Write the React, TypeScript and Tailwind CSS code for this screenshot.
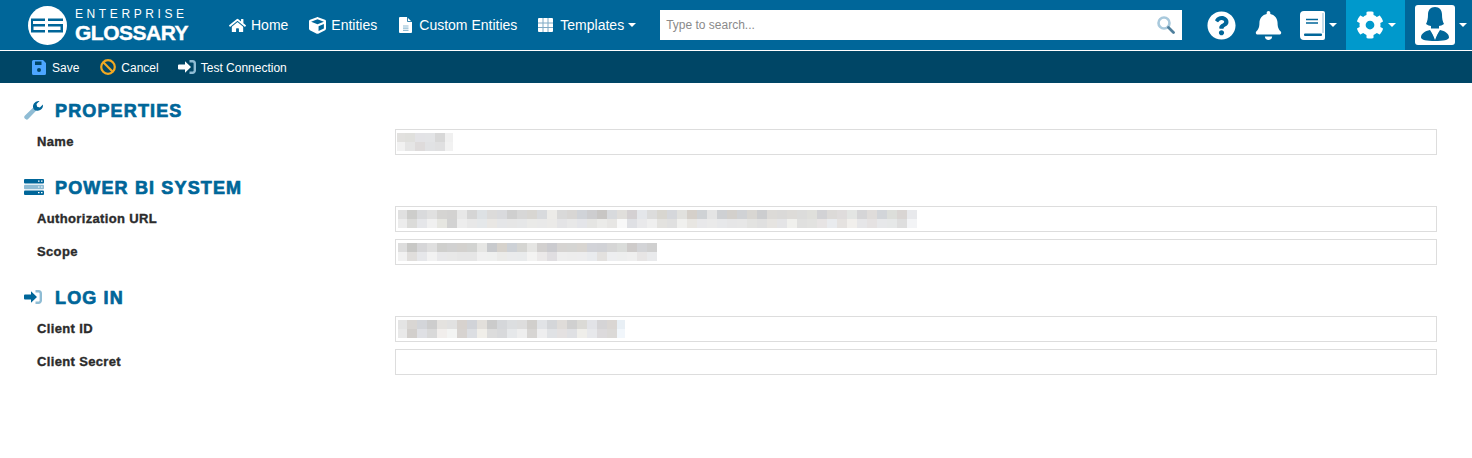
import React from "react";
import { FaHome, FaCube, FaBell, FaCog, FaQuestionCircle } from "react-icons/fa";

const sans = "font-['Liberation_Sans',Arial,sans-serif]";

// blurred values in the form, one list per pixel row
const nameBlur = [
  ["#e2e1df", "#e0e0dd", "#e3e3e6", "#e3e4e6", "#d8d8d8", "#f0f0f0"],
  ["#f1f1f1", "#e5e5e5", "#dedbdb", "#e1e2e4", "#e0e0e1", "#f2f2f2"],
];
const authBlur = [
  ["#e0e0e0", "#cdcdcb", "#d9dadc", "#e0e0e0", "#d5d4d2", "#d3d2d1", "#e7e7e7", "#d5d5d5", "#dde1e4", "#dcdbda", "#d9dadd", "#cfcfcf", "#d7d7d7", "#d8d6d2", "#d8dadd", "#ecebe8", "#d9d9d9", "#d8d6d4", "#d0d3d8", "#cdcdcf", "#c8c6c4", "#d8dadd", "#e0dedb", "#d4d0d2", "#e4e6ea", "#dcdcdc", "#d8d6d0", "#d5d7db", "#e1e1de", "#d5d0ca", "#cfd2d5", "#e4e4e4", "#ced0d3", "#d3d0cc", "#d0d2d5", "#d8d6d2", "#cccdcf", "#dcdad7", "#dad9d8", "#dddbd8", "#dcdcdb", "#dfdfdb", "#d2d2d5", "#dcdad8", "#dfdcdc", "#e3e5e3", "#d5d5d7", "#dfdcda", "#d2d5d9", "#dcdeda", "#d9d5d3", "#e8e9ec"],
  ["#ececec", "#dbdbd9", "#e5e6e9", "#f0f0f0", "#e6e6e1", "#d2d2d2", "#ededed", "#e8e8e8", "#e5e8ea", "#e9e7e4", "#e5e6e8", "#e6e6e6", "#e6e7e8", "#eaeae8", "#e9e9e9", "#ebeae8", "#e4e4e6", "#e8e8e8", "#e4e5e9", "#e5e5e3", "#ebebe9", "#e7e6e4", "#f8f8f8", "#dfe0e4", "#e9e9eb", "#efefef", "#e3e2df", "#e0e0e0", "#f0f0ee", "#e8e6e2", "#e8e8ea", "#eaeaea", "#e7e8ea", "#e6e6e7", "#e7e7e7", "#e3e3e1", "#e0e0e0", "#e6e4e1", "#e4e4e6", "#f0f0ed", "#e0e0df", "#e2e2e0", "#e7e4e4", "#e9ebee", "#e5e2e0", "#f1efec", "#e6e6e8", "#e5e2e2", "#e7e8ea", "#e6e8e8", "#dedede", "#f3f4f6"],
];
const scopeBlur = [
  ["#dddddd", "#c8c8c6", "#d6d6d8", "#dfdfdf", "#cfcfcd", "#d1d1d1", "#d3d1ce", "#d2d3d1", "#e6e6e4", "#c8cacd", "#d6d2cc", "#cdd1d6", "#d5d5d2", "#e5e5e3", "#d2d0cf", "#cbcbcf", "#d6d4d2", "#d5d5d3", "#d8d5d1", "#d2d3d8", "#d1d2d6", "#d6d6d6", "#dadcda", "#cecbca", "#d3d4d7", "#d0d0d0"],
  ["#f1f1f1", "#e0dedc", "#e6e7ea", "#f2f2f2", "#e8e8ea", "#e8e8e8", "#e6e6e6", "#e6e6e6", "#f0f0f0", "#eff0ef", "#ebebe9", "#eaebec", "#e9ebec", "#f3f3f2", "#ebe9e9", "#e0dee1", "#eeeeee", "#ededed", "#ededee", "#e9ebee", "#e3e1df", "#edeef0", "#edeeee", "#efefef", "#e7e5e5", "#e9eaec"],
];
const clientBlur = [
  ["#e4e4e4", "#d9d6d3", "#d3d5d9", "#cdcdcd", "#e4e2df", "#e1e1e1", "#d7d2ce", "#d1d3d8", "#e2dfdb", "#cbcbcb", "#d5d7da", "#dcdee0", "#dddddd", "#d1cfcc", "#e1e3e6", "#d4d6d9", "#dfdcd9", "#d0d0d0", "#dbdad6", "#e2e3e7", "#d5d4d6", "#dad6d3", "#e8eff5"],
  ["#e9e9e9", "#d2cfcc", "#dfe0e4", "#d9d9d9", "#f1eeec", "#f3f4f3", "#d7d3d0", "#dcdee2", "#f0eee9", "#dcdcdc", "#d8d9db", "#e6e8ea", "#eeeeee", "#d7d5d3", "#eeeeef", "#e0e2e5", "#e4e1e1", "#dfe0e3", "#efeeea", "#e7e8eb", "#dcdadc", "#dbd9d7", "#f1f6fb"],
];

const Caret = () => <span className="ml-1 h-0 w-0 border-x-4 border-t-4 border-x-transparent border-t-white" />;

const Blur = ({ rows, first, last }: { rows: string[][]; first: number; last: number }) => (
  <div className="flex flex-col">
    {rows.map((row, r) => (
      <div key={r} className="flex h-[9px]">
        {row.map((color, i) => (
          <span
            key={i}
            className="block h-full"
            style={{ backgroundColor: color, width: i === 0 ? first : i === row.length - 1 ? last : 10 }}
          />
        ))}
      </div>
    ))}
  </div>
);

const Row = ({ label, rows, first = 9, last = 10, left = 2 }: { label: string; rows?: string[][]; first?: number; last?: number; left?: number }) => (
  <div className="flex items-center">
    <label className="w-[371px] pl-[13px] text-[13px] font-bold tracking-[0.35px] text-[#2b2b2b] [-webkit-text-stroke:0.35px_#2b2b2b]">
      {label}
    </label>
    <div className="flex h-[26px] w-[1042px] items-center border border-[#dddddd] bg-white" style={{ paddingLeft: left }}>
      {rows && <Blur rows={rows} first={first} last={last} />}
    </div>
  </div>
);

const Heading = ({ icon, children, top }: { icon: React.ReactNode; children: string; top?: boolean }) => (
  <h2 className={`flex h-[26px] items-center ${top ? "" : "mt-[19px]"} mb-[6px]`}>
    <span className="flex w-[31px] items-center">{icon}</span>
    <span className="translate-y-px text-[18px] font-bold tracking-[1.15px] text-[#006699] [-webkit-text-stroke:0.7px_#006699]">{children}</span>
  </h2>
);

const WrenchIcon = () => (
  <svg width="20" height="20" viewBox="0 0 20 20">
    <path d="M1 15.500 9.800 7l3 3L4.400 18.800a2.200 2.200 0 0 1-3.400-3.300Z" fill="#8fbcd4" />
    <path d="M10 9.500a5.500 5.500 0 0 1 5.500-8.500l-3 3 .6 2.800 2.800.6 3-3A5.500 5.500 0 0 1 10 9.500Z" fill="#006699" />
  </svg>
);

const ServerIcon = () => (
  <svg width="20" height="16" viewBox="0 0 20 16">
    <rect x="0" y="0" width="20" height="4.500" rx="1" fill="#006699" />
    <rect x="0" y="5.700" width="20" height="4.500" rx="1" fill="#8fbcd4" />
    <rect x="0" y="11.400" width="20" height="4.500" rx="1" fill="#006699" />
    <path d="M14 2.200h1.500M17 2.200h1.500M14 13.700h1.500M17 13.700h1.500M14 8h1.500M17 8h1.500" stroke="#fff" strokeWidth="1.200" />
  </svg>
);

const EnterIcon = ({ arrow, door, size = 18 }: { arrow: string; door: string; size?: number }) => (
  <svg width={size} height={(size * 14) / 18} viewBox="0 0 18 14">
    <path d="M11.500 1.200h3A2.300 2.300 0 0 1 16.800 3.500v7a2.300 2.300 0 0 1-2.300 2.300h-3" fill="none" stroke={door} strokeWidth="2.400" />
    <path d="M7 1.200 13 7l-6 5.800V9.500H1a1 1 0 0 1-1-1V5.500a1 1 0 0 1 1-1h6Z" fill={arrow} />
  </svg>
);

const SaveIcon = () => (
  <svg width="14" height="15" viewBox="0 0 14 15">
    <path d="M1.500 0H11l3 3v10.500a1.500 1.500 0 0 1-1.500 1.500h-11A1.500 1.500 0 0 1 0 13.500v-12A1.500 1.500 0 0 1 1.500 0Z" fill="#4da6ff" />
    <rect x="3" y="1.500" width="6.500" height="3.500" fill="#004666" />
    <circle cx="7" cy="10" r="2" fill="#004666" />
  </svg>
);

const BanIcon = () => (
  <svg width="16" height="16" viewBox="0 0 16 16">
    <circle cx="8" cy="8" r="6.800" fill="none" stroke="#f2a922" strokeWidth="2.200" />
    <path d="M3.300 3.300l9.400 9.400" stroke="#f2a922" strokeWidth="2.200" />
  </svg>
);

const DocIcon = () => (
  <svg width="13" height="16" viewBox="0 0 13 16">
    <path d="M1 0h7l5 5v10a1 1 0 0 1-1 1H1a1 1 0 0 1-1-1V1a1 1 0 0 1 1-1Z" fill="#fff" />
    <path d="M8.500 0v4.500H13" fill="none" stroke="#006699" strokeWidth=".8" />
    <path d="M4 9h5.500M4 11.200h5.500M4 13.400h5.500" stroke="#8fbcd4" strokeWidth="1.200" />
  </svg>
);

const GridIcon = () => (
  <svg width="15" height="14" viewBox="0 0 15 14">
    <rect width="15" height="14" rx="1" fill="#fff" />
    <path d="M5 0v14M10 0v14M0 5h15M0 9.500h15" stroke="#7fa9c4" strokeWidth="1" />
  </svg>
);

const BookIcon = () => (
  <svg width="25" height="29" viewBox="0 0 25 29">
    <path d="M4 0h19a2 2 0 0 1 2 2v25a2 2 0 0 1-2 2H4a4 4 0 0 1-4-4V4a4 4 0 0 1 4-4Z" fill="#fff" />
    <rect x="22.500" y="2" width="1" height="20" fill="#8fbcd4" />
    <path d="M6 8.500h12M6 12h12" stroke="#006699" strokeWidth="1.300" />
    <rect x="4" y="22.500" width="18" height="2.500" rx="1" fill="#006699" />
  </svg>
);

const SearchIcon = () => (
  <svg width="18" height="18" viewBox="0 0 18 18">
    <circle cx="7" cy="7" r="5.500" fill="none" stroke="#a9c9dc" strokeWidth="2.600" />
    <path d="M11.500 11.500 16.500 16.500" stroke="#4f7f9c" strokeWidth="2.800" strokeLinecap="round" />
  </svg>
);

const AvatarIcon = () => (
  <svg width="28" height="34" viewBox="0 0 28 34">
    <path d="M14 0c4.500 0 7 3 7 7.500 0 4 .6 7 2 9.500-1.500 1.300-4 2-5 2v2.500h-8V19c-1 0-3.500-.7-5-2 1.400-2.500 2-5.500 2-9.500C7 3 9.500 0 14 0Z" fill="#006699" />
    <path d="M9 23 14 31l5-8c5 1 9 3.500 9 7.500 0 2.500-6 3.500-14 3.500S0 33 0 30.500C0 26.500 4 24 9 23Z" fill="#006699" />
    <path d="M9.500 21.500 14 33l4.500-11.500L14 27Z" fill="#fff" />
  </svg>
);

const Logo = () => (
  <svg width="39" height="39" viewBox="0 0 39 39" className="shrink-0">
    <circle cx="19.500" cy="19.500" r="19.500" fill="#fff" />
    <path d="M5 15h12v-2.500H3v14h14V24H5.500v-3.500H17V18H5Z" fill="#006699" />
    <path d="M20 12.500h15V15H20ZM20 18h15v8.500H20V24h12.500v-3.500H20Z" fill="#006699" />
  </svg>
);

const NavLink = ({ icon, label, caret, className }: { icon: React.ReactNode; label: string; caret?: boolean; className?: string }) => (
  <a className={`flex items-center text-[14px] text-white ${className ?? ""}`}>
    {icon}
    <span>{label}</span>
    {caret && <Caret />}
  </a>
);

const ToolButton = ({ icon, label, gap }: { icon: React.ReactNode; label: string; gap: string }) => (
  <a className={`flex items-center text-[12px] text-white ${gap}`}>
    {icon}
    <span className="translate-y-px">{label}</span>
  </a>
);

export default function App() {
  return (
    <div className={`min-h-[458px] bg-white ${sans}`}>
      <header className="flex h-[50px] items-center bg-[#006699] pl-[28px]">
        <Logo />
        <div className="ml-[8px] flex w-[154px] flex-col pt-[2px] text-white">
          <span className="text-[12px] font-normal leading-[14px] tracking-[3.6px]">ENTERPRISE</span>
          <span className="text-[21px] font-bold leading-[24px] tracking-[-0.5px] [-webkit-text-stroke:0.4px_#fff]">GLOSSARY</span>
        </div>
        <nav className="flex items-center">
          <NavLink icon={<FaHome className="mr-[5px] text-[17px]" />} label="Home" />
          <NavLink className="ml-[21px]" icon={<FaCube className="mr-[5px] text-[17px]" />} label="Entities" />
          <NavLink className="ml-[22px]" icon={<span className="mr-[7px] flex"><DocIcon /></span>} label="Custom Entities" />
          <NavLink className="ml-[21px]" icon={<span className="mr-[7px] flex"><GridIcon /></span>} label="Templates" caret />
        </nav>
        <div className="ml-[24px] flex h-[30px] w-[522px] items-center justify-between bg-white pl-[6px] pr-[7px]">
          <span className="text-[12px] text-[#8a8a8a]">Type to search...</span>
          <SearchIcon />
        </div>
        <div className="ml-[25px] flex h-full items-center">
          <FaQuestionCircle className="text-[29px] text-white" />
          <FaBell className="ml-[18px] text-[29px] text-white" />
          <span className="ml-[17px] flex"><BookIcon /></span>
          <Caret />
          <div className="ml-[9px] flex h-full w-[59px] items-center justify-center bg-[#0099cc]">
            <FaCog className="text-[28px] text-white" />
            <Caret />
          </div>
          <div className="ml-[10px] flex h-[40px] w-[40px] items-end justify-center rounded-[3px] bg-white pb-[4px]">
            <AvatarIcon />
          </div>
          <Caret />
        </div>
      </header>
      <div className="h-px bg-white" />
      <div className="flex h-[32px] items-center bg-[#004666] pl-[32px]">
        <ToolButton icon={<SaveIcon />} label="Save" gap="gap-[6px]" />
        <span className="ml-[21px]"><ToolButton icon={<BanIcon />} label="Cancel" gap="gap-[5px]" /></span>
        <span className="ml-[19px]"><ToolButton icon={<EnterIcon arrow="#fff" door="#8fbcd4" />} label="Test Connection" gap="gap-[5px]" /></span>
      </div>
      <main className="pl-[24px] pt-[14px]">
        <Heading icon={<WrenchIcon />} top>PROPERTIES</Heading>
        <Row label="Name" rows={nameBlur} first={8} last={8} left={1} />
        <Heading icon={<ServerIcon />}>POWER BI SYSTEM</Heading>
        <div className="flex flex-col gap-[7px]">
          <Row label="Authorization URL" rows={authBlur} />
          <Row label="Scope" rows={scopeBlur} />
        </div>
        <Heading icon={<EnterIcon arrow="#006699" door="#8fbcd4" />}>LOG IN</Heading>
        <div className="flex flex-col gap-[7px]">
          <Row label="Client ID" rows={clientBlur} last={8} />
          <Row label="Client Secret" />
        </div>
      </main>
    </div>
  );
}
